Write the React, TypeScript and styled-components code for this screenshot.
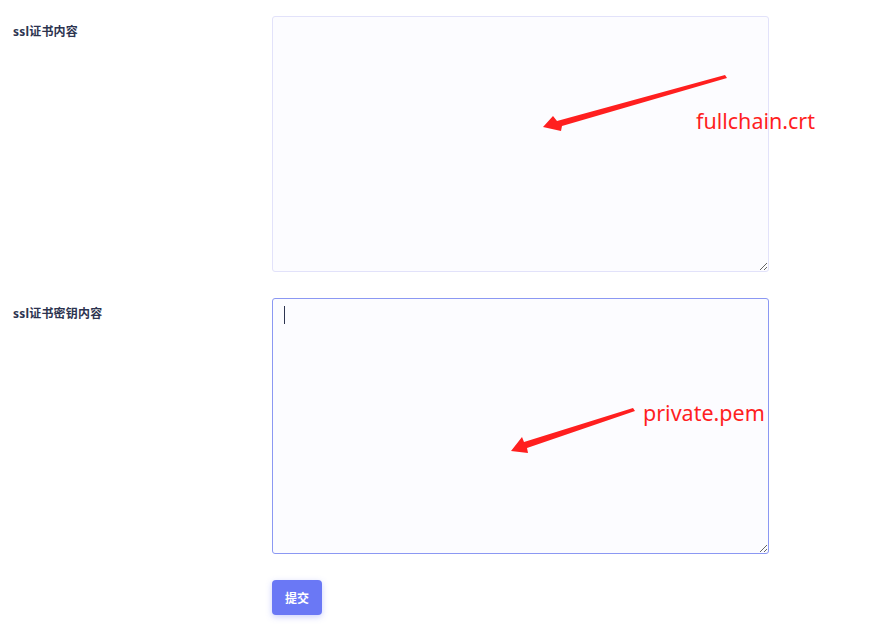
import React from "react";
import styled, { createGlobalStyle } from "styled-components";

const Global = createGlobalStyle`
  html, body { margin: 0; padding: 0; background: #ffffff; }
  body { font-family: "Noto Sans", "Noto Sans CJK SC", sans-serif; }
`;

const Page = styled.div`
  position: relative;
  width: 892px;
  height: 628px;
  padding-top: 16px;
  box-sizing: border-box;
  overflow: hidden;
`;

const Form = styled.form`
  display: flex;
  flex-direction: column;
  gap: 26px;
`;

const Row = styled.div`
  display: grid;
  grid-template-columns: 272px 497px;
  align-items: start;
`;

const Label = styled.label`
  padding: 7px 0 0 13px;
  font-family: "Noto Sans", "Noto Sans CJK SC", sans-serif;
  font-size: 12px;
  font-weight: 700;
  letter-spacing: 0.2px;
  line-height: 18px;
  color: #2d3450;
`;

const Field = styled.div`
  position: relative;
`;

const Area = styled.textarea<{ $focused?: boolean }>`
  display: block;
  width: 497px;
  height: 256px;
  box-sizing: border-box;
  margin: 0;
  padding: 8px 12px;
  border: 1px solid ${(p) => (p.$focused ? "#8b98f3" : "#e2e2fa")};
  border-radius: 3px;
  background: #fcfcff;
  outline: none;
  resize: vertical;
  font-family: "Liberation Mono", monospace;
  font-size: 13px;
`;

const Caret = styled.span`
  position: absolute;
  left: 12px;
  top: 8px;
  width: 1px;
  height: 18px;
  background: #2d3450;
`;

const Actions = styled.div`
  padding-left: 272px;
`;

const Submit = styled.button`
  width: 50px;
  height: 35px;
  border: none;
  border-radius: 4px;
  background: #6a78f5;
  color: #ffffff;
  font-family: "Noto Sans CJK SC", sans-serif;
  font-size: 12px;
  font-weight: 700;
  box-shadow: 0 2px 6px rgba(106, 120, 245, 0.35);
  cursor: pointer;
`;

const Overlay = styled.svg`
  position: absolute;
  left: 0;
  top: 0;
  pointer-events: none;
`;

const Note = styled.span<{ $x: number; $y: number }>`
  position: absolute;
  left: ${(p) => p.$x}px;
  top: ${(p) => p.$y}px;
  font-family: "Noto Sans", "Noto Sans CJK SC", sans-serif;
  font-size: 21.5px;
  line-height: 26px;
  color: #ff1f1f;
  white-space: nowrap;
`;

export default function App() {
  return (
    <>
      <Global />
      <Page>
        <Form onSubmit={(e) => e.preventDefault()}>
          <Row>
            <Label>ssl证书内容</Label>
            <Field>
              <Area />
            </Field>
          </Row>
          <Row>
            <Label>ssl证书密钥内容</Label>
            <Field>
              <Area $focused />
              <Caret />
            </Field>
          </Row>
          <Actions>
            <Submit type="submit">提交</Submit>
          </Actions>
        </Form>
        <Overlay width={892} height={628} viewBox="0 0 892 628">
          <polygon
            fill="#ff1f1f"
            points="725,75 727,78 562,126 561,131 543,127 553,116 557,121"
          />
          <polygon
            fill="#ff1f1f"
            points="633,408 635,411 527,448 528,453 511,451 522,437 524,442"
          />
        </Overlay>
        <Note $x={696} $y={108}>fullchain.crt</Note>
        <Note $x={643} $y={400}>private.pem</Note>
      </Page>
    </>
  );
}
